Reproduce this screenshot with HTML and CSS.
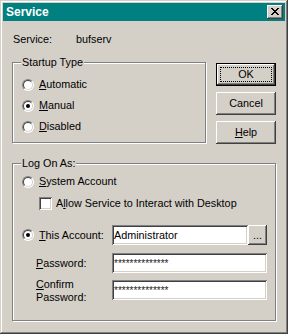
FILE: index.html
```html
<!DOCTYPE html>
<html>
<head>
<meta charset="utf-8">
<title>Service</title>
<link rel="stylesheet" href="styles.css">
</head>
<body>
<div class="window">
  <div class="titlebar">
    <span class="title">Service</span>
    <span class="close"><svg width="8" height="7" viewBox="0 0 8 7" shape-rendering="crispEdges"><path fill="#000" d="M0 0h2v1H0zM6 0h2v1H6zM1 1h2v1H1zM5 1h2v1H5zM2 2h4v1H2zM3 3h2v1H3zM2 4h4v1H2zM1 5h2v1H1zM5 5h2v1H5zM0 6h2v1H0zM6 6h2v1H6z"/></svg></span>
  </div>
  <div class="client">
    <div class="service-row"><span class="service-label">Service:</span><span>bufserv</span></div>
    <div class="top">
      <fieldset class="group startup">
        <legend>Startup Type</legend>
        <div class="inner">
          <div class="opt"><span class="radio"></span><span><u>A</u>utomatic</span></div>
          <div class="opt"><span class="radio checked"></span><span><u>M</u>anual</span></div>
          <div class="opt"><span class="radio"></span><span><u>D</u>isabled</span></div>
        </div>
      </fieldset>
      <div class="buttons">
        <div class="btn default"><span class="focus">OK</span></div>
        <div class="btn">Cancel</div>
        <div class="btn"><span><u>H</u>elp</span></div>
      </div>
    </div>
    <fieldset class="group logon">
      <legend>Log On As:</legend>
      <div class="inner">
        <div class="opt"><span class="radio"></span><span><u>S</u>ystem Account</span></div>
        <div class="check-row"><span class="checkbox"></span><span>A<u>l</u>low Service to Interact with Desktop</span></div>
        <div class="acct-row"><span class="radio checked"></span><span class="acct-label"><u>T</u>his Account:</span><span class="field acct-field">Administrator</span><span class="btn browse">...</span></div>
        <div class="pw-row"><span class="pw-label"><u>P</u>assword:</span><span class="field pw-field">**************</span></div>
        <div class="pw-row confirm"><span class="pw-label"><u>C</u>onfirm<br>Password:</span><span class="field pw-field">**************</span></div>
      </div>
    </fieldset>
  </div>
</div>
</body>
</html>
```
FILE: styles.css
```css
* { box-sizing: border-box; }
html, body { margin: 0; padding: 0; background: #d4d0c8; }
body {
  font-family: "Liberation Sans", Arial, sans-serif;
  font-size: 10.8px;
  line-height: 13px;
  color: #000;
}
u { text-decoration: underline; text-underline-offset: 1px; }

.window {
  width: 288px;
  height: 334px;
  padding: 3px;
  background: #d4d0c8;
  box-shadow: inset -1px -1px #404040, inset 1px 1px #d4d0c8, inset -2px -2px #808080, inset 2px 2px #fff;
  display: flex;
  flex-direction: column;
}
.titlebar {
  height: 18px;
  background: #008080;
  display: flex;
  align-items: center;
  justify-content: space-between;
  padding: 0 2px 0 3px;
}
.title { color: #fff; font-weight: bold; font-size: 12px; line-height: 18px; }
.close {
  width: 16px;
  height: 14px;
  background: #d4d0c8;
  box-shadow: inset -1px -1px #404040, inset 1px 1px #fff, inset -2px -2px #808080;
  display: flex;
  padding: 3px 0 0 4px;
}
.close svg { display: block; }

.client { padding: 12px 9px 0; }
.service-row { display: flex; padding-left: 1px; height: 13px; }
.service-label { width: 63px; }

.top { display: flex; align-items: flex-start; margin-top: 10px; }

.group {
  margin: 0;
  padding: 0;
  min-width: 0;
  border: 1px solid #808080;
  box-shadow: inset 1px 1px #fff, 1px 1px #fff;
}
.group legend {
  margin-left: 8px;
  padding: 0 1px;
  background: #d4d0c8;
  line-height: 13px;
}
.startup { width: 194px; }
.startup .inner { padding: 5px 0 5px 9px; }

.opt { display: flex; align-items: center; gap: 5px; height: 21px; }

.radio {
  position: relative;
  flex: none;
  width: 12px;
  height: 12px;
  border-radius: 50%;
  border: 1px solid;
  border-color: #808080 #fff #fff #808080;
  background: #fff;
}
.radio::before {
  content: "";
  position: absolute;
  inset: 0;
  border-radius: 50%;
  border: 1px solid;
  border-color: #404040 #d4d0c8 #d4d0c8 #404040;
}
.radio.checked::after {
  content: "";
  position: absolute;
  left: 3px;
  top: 3px;
  width: 4px;
  height: 4px;
  border-radius: 50%;
  background: #000;
}

.buttons { margin-left: 10px; margin-top: 7px; display: flex; flex-direction: column; gap: 6px; }
.btn {
  width: 60px;
  height: 23px;
  display: flex;
  align-items: center;
  justify-content: center;
  background: #d4d0c8;
  box-shadow: inset -1px -1px #404040, inset 1px 1px #fff, inset -2px -2px #808080, inset 2px 2px #d4d0c8;
}
.btn.default {
  border: 1px solid #000;
  box-shadow: inset -1px -1px #404040, inset 1px 1px #fff, inset -2px -2px #808080;
}
.focus {
  width: 52px;
  height: 15px;
  border: 1px dotted #000;
  display: flex;
  align-items: center;
  justify-content: center;
}

.logon { margin-top: 13px; width: 264px; }
.logon .inner { padding: 1px 8px 16px 9px; }

.check-row { display: flex; align-items: center; gap: 4px; height: 13px; margin-top: 5px; padding-left: 17px; }
.checkbox {
  flex: none;
  width: 13px;
  height: 13px;
  background: #fff;
  box-shadow: inset 1px 1px #808080, inset -1px -1px #fff, inset 2px 2px #404040, inset -2px -2px #d4d0c8;
}

.field {
  height: 20px;
  background: #fff;
  box-shadow: inset 1px 1px #808080, inset -1px -1px #fff, inset 2px 2px #404040, inset -2px -2px #d4d0c8;
  padding: 0 2px;
  display: flex;
  align-items: center;
  white-space: nowrap;
  overflow: hidden;
}

.acct-row { display: flex; align-items: center; height: 20px; margin-top: 15px; }
.acct-row .radio { margin-right: 5px; }
.acct-label { width: 73px; }
.acct-field { width: 136px; }
.browse { width: 19px; height: 20px; }

.pw-row { display: flex; align-items: center; height: 20px; margin-top: 8px; padding-left: 14px; }
.pw-label { width: 76px; }
.pw-field { width: 155px; font-size: 10px; color: #222; }
.pw-row.confirm { align-items: flex-start; height: 26px; margin-top: 5px; }
.pw-row.confirm .pw-field { margin-top: 2px; }
```
